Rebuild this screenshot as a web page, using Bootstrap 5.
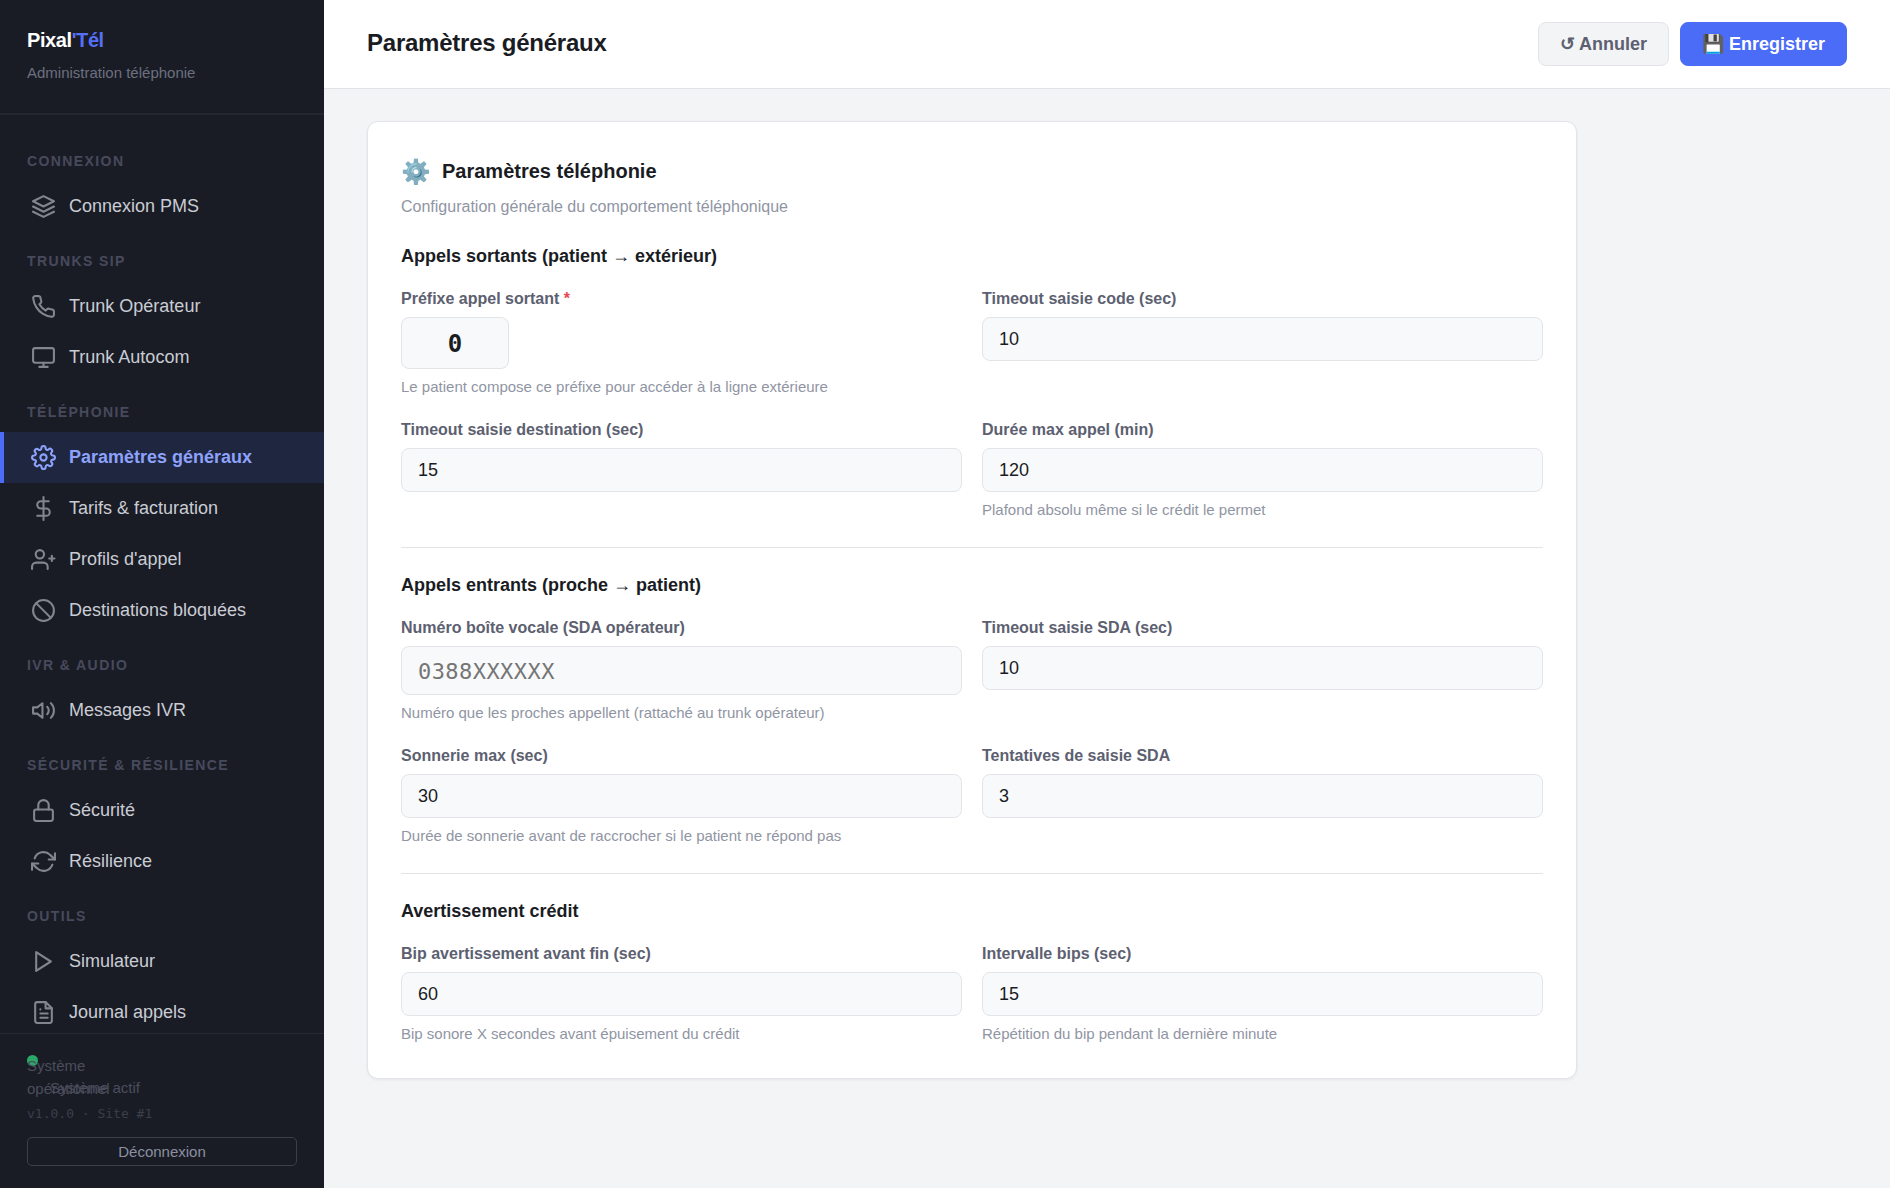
<!DOCTYPE html>
<html lang="fr">
<head>
<meta charset="utf-8">
<meta name="viewport" content="width=device-width, initial-scale=1">
<title>Pixal'Tél – Paramètres généraux</title>
<link href="https://cdn.jsdelivr.net/npm/bootstrap@5.3.0/dist/css/bootstrap.min.css" rel="stylesheet">
<style>
  :root {
    --ink: #1a1c23;
    --muted: #9095a3;
    --label: #5c6070;
    --line: #e2e4e8;
    --accent: #4a6cf7;
    --dark: #1a1c25;
    --sans: "Liberation Sans", Arial, sans-serif;
    --mono: "DejaVu Sans Mono", monospace;
  }
  body { font-family: var(--sans); font-size: 18px; line-height: 24px; color: var(--ink); background: #f3f4f6; }

  /* Sidebar */
  .side { width: 324px; height: 100vh; top: 0; background: var(--dark); }
  .brand { padding: 27px 27px 28px; border-bottom: 2px solid #252730; }
  .brand-name { font-size: 20px; line-height: 26px; letter-spacing: -.02em; color: #fff; }
  .brand-name span { color: #5570f5; }
  .brand-sub { font-size: 15px; line-height: 24px; margin-top: 8px; color: #6b7080; }
  .menu { padding-top: 17px; min-height: 0; }
  .menu-title { font-size: 14px; line-height: 20px; letter-spacing: .1em; padding: 19px 27px 10px; margin: 0; color: #474a5c; }
  .menu-link { gap: 13px; padding: 12px 27px; line-height: 27px; border-left: 4px solid transparent; color: #c9ccd4; text-decoration: none; }
  .menu-link svg { width: 25px; height: 25px; flex: none; fill: none; stroke: currentColor; stroke-width: 2; stroke-linecap: round; stroke-linejoin: round; opacity: .6; }
  .menu-link.current { background: #1f2640; border-left-color: var(--accent); color: #8da2fb; font-weight: 700; }
  .menu-link.current svg { opacity: 1; }
  .side-foot { padding: 19px 27px 22px; border-top: 1px solid #272932; background: var(--dark); font-size: 15px; line-height: 23px; color: #4a4d5c; }
  .state { height: 51px; }
  .dot { width: 11px; height: 11px; left: 0; top: 2px; background: #2ba868; }
  .state-long { width: 90px; left: 0; top: 1px; }
  .state-short { left: 23px; top: 23px; white-space: nowrap; }
  .version { font-family: var(--mono); font-size: 13px; line-height: 20px; color: #3b3e4b; }
  .btn-out { margin-top: 13px; padding: 0; font-size: 15px; line-height: 27px; border: 1px solid #3b3e4b; border-radius: 5px; color: #8b90a0; }

  /* Header */
  .topbar { padding: 22px 43px; border-bottom: 1px solid var(--line); background: #fff; }
  .page-title { font-size: 24px; line-height: 30px; letter-spacing: -.01em; padding-bottom: 2px; }
  .bar-actions { gap: 11px; }
  .btn-bar { padding: 9px 21px; font-size: 18px; line-height: 24px; font-weight: 700; border-radius: 8px; }
  .btn-undo { background: #f3f4f6; border-color: var(--line); color: var(--label); }
  .btn-save { background: var(--accent); border-color: var(--accent); color: #fff; }

  /* Form card */
  .content { padding: 32px 43px; }
  .panel { max-width: 1210px; padding: 33px; border: 1px solid var(--line); border-radius: 11px; background: #fff; box-shadow: 0 1px 3px rgba(0,0,0,.06); }
  .panel-head { gap: 11px; height: 33px; }
  .panel-head .emoji { font-size: 24px; line-height: 33px; }
  .panel-title { font-size: 20px; line-height: 33px; }
  .panel-sub { font-size: 16px; margin: 7px 0 25px; color: var(--muted); }
  .group-title { font-size: 18px; line-height: 24px; margin: 0 0 20px; }
  .fields { --bs-gutter-x: 20px; --bs-gutter-y: 21px; }
  .field label { font-size: 16px; line-height: 22px; font-weight: 700; margin-bottom: 7px; color: var(--label); }
  .field .form-control { height: 44px; padding: 1px 16px 0; font-size: 18px; line-height: 24px; border: 1px solid var(--line); border-radius: 8px; background: #f8f9fb; color: var(--ink); }
  .field .prefix { width: 108px; height: 52px; font-family: var(--mono); font-size: 24px; font-weight: 700; text-align: center; }
  .field .number { height: 49px; font-family: var(--mono); font-size: 22px; letter-spacing: .02em; }
  .field .number::placeholder { color: #757575; }
  .required { color: #e5484d; }
  .hint { font-size: 15px; line-height: 22px; margin: 7px 0 0; color: var(--muted); }
  .rule { margin: 26px 0 25px; border: 0; border-top: 1px solid var(--line); opacity: 1; }
</style>
</head>
<body>
<div class="d-flex align-items-start">

  <aside class="side d-flex flex-column flex-shrink-0 position-sticky">
    <div class="brand">
      <div class="brand-name fw-bold">Pixal<span>'Tél</span></div>
      <div class="brand-sub">Administration téléphonie</div>
    </div>

    <nav class="menu flex-grow-1 overflow-hidden" aria-label="Menu principal">
      <h2 class="menu-title fw-bold">CONNEXION</h2>
      <a class="menu-link d-flex align-items-center" href="#"><svg viewBox="0 0 24 24"><path d="M12 2 2 7l10 5 10-5-10-5z"/><path d="m2 17 10 5 10-5M2 12l10 5 10-5"/></svg>Connexion PMS</a>

      <h2 class="menu-title fw-bold">TRUNKS SIP</h2>
      <a class="menu-link d-flex align-items-center" href="#"><svg viewBox="0 0 24 24"><path d="M22 16.92v3a2 2 0 0 1-2.18 2 19.79 19.79 0 0 1-8.63-3.07 19.5 19.5 0 0 1-6-6 19.79 19.79 0 0 1-3.07-8.67A2 2 0 0 1 4.11 2h3a2 2 0 0 1 2 1.72 12.84 12.84 0 0 0 .7 2.81 2 2 0 0 1-.45 2.11L8.09 9.91a16 16 0 0 0 6 6l1.27-1.27a2 2 0 0 1 2.11-.45 12.84 12.84 0 0 0 2.81.7A2 2 0 0 1 22 16.92z"/></svg>Trunk Opérateur</a>
      <a class="menu-link d-flex align-items-center" href="#"><svg viewBox="0 0 24 24"><rect x="2" y="3" width="20" height="14" rx="2"/><path d="M8 21h8M12 17v4"/></svg>Trunk Autocom</a>

      <h2 class="menu-title fw-bold">TÉLÉPHONIE</h2>
      <a class="menu-link current d-flex align-items-center" href="#" aria-current="page"><svg viewBox="0 0 24 24"><circle cx="12" cy="12" r="3"/><path d="M19.4 15a1.65 1.65 0 0 0 .33 1.82l.06.06a2 2 0 0 1-2.83 2.83l-.06-.06a1.65 1.65 0 0 0-1.82-.33 1.65 1.65 0 0 0-1 1.51V21a2 2 0 0 1-4 0v-.09A1.65 1.65 0 0 0 9 19.4a1.65 1.65 0 0 0-1.82.33l-.06.06a2 2 0 0 1-2.83-2.83l.06-.06a1.65 1.65 0 0 0 .33-1.82 1.65 1.65 0 0 0-1.51-1H3a2 2 0 0 1 0-4h.09A1.65 1.65 0 0 0 4.6 9a1.65 1.65 0 0 0-.33-1.82l-.06-.06a2 2 0 0 1 2.83-2.83l.06.06a1.65 1.65 0 0 0 1.82.33H9a1.65 1.65 0 0 0 1-1.51V3a2 2 0 0 1 4 0v.09a1.65 1.65 0 0 0 1 1.51 1.65 1.65 0 0 0 1.82-.33l.06-.06a2 2 0 0 1 2.83 2.83l-.06.06a1.65 1.65 0 0 0-.33 1.82V9a1.65 1.65 0 0 0 1.51 1H21a2 2 0 0 1 0 4h-.09a1.65 1.65 0 0 0-1.51 1z"/></svg>Paramètres généraux</a>
      <a class="menu-link d-flex align-items-center" href="#"><svg viewBox="0 0 24 24"><path d="M12 1v22M17 5H9.500a3.500 3.500 0 0 0 0 7h5a3.500 3.500 0 0 1 0 7H6"/></svg>Tarifs &amp; facturation</a>
      <a class="menu-link d-flex align-items-center" href="#"><svg viewBox="0 0 24 24"><path d="M16 21v-2a4 4 0 0 0-4-4H5a4 4 0 0 0-4 4v2"/><circle cx="8.500" cy="7" r="4"/><path d="M20 8.500v5M17.500 11h5"/></svg>Profils d'appel</a>
      <a class="menu-link d-flex align-items-center" href="#"><svg viewBox="0 0 24 24"><circle cx="12" cy="12" r="10"/><path d="m4.930 4.930 14.140 14.140"/></svg>Destinations bloquées</a>

      <h2 class="menu-title fw-bold">IVR &amp; AUDIO</h2>
      <a class="menu-link d-flex align-items-center" href="#"><svg viewBox="0 0 24 24"><path d="M11 5 6 9H2v6h4l5 4V5z"/><path d="M19.070 4.930a10 10 0 0 1 0 14.140M15.540 8.460a5 5 0 0 1 0 7.070"/></svg>Messages IVR</a>

      <h2 class="menu-title fw-bold">SÉCURITÉ &amp; RÉSILIENCE</h2>
      <a class="menu-link d-flex align-items-center" href="#"><svg viewBox="0 0 24 24"><rect x="3" y="11" width="18" height="11" rx="2"/><path d="M7 11V7a5 5 0 0 1 10 0v4"/></svg>Sécurité</a>
      <a class="menu-link d-flex align-items-center" href="#"><svg viewBox="0 0 24 24"><path d="M23 4v6h-6M1 20v-6h6"/><path d="M3.510 9a9 9 0 0 1 14.850-3.360L23 10M1 14l4.640 4.360A9 9 0 0 0 20.490 15"/></svg>Résilience</a>

      <h2 class="menu-title fw-bold">OUTILS</h2>
      <a class="menu-link d-flex align-items-center" href="#"><svg viewBox="0 0 24 24"><path d="m5 3 14 9-14 9V3z"/></svg>Simulateur</a>
      <a class="menu-link d-flex align-items-center" href="#"><svg viewBox="0 0 24 24"><path d="M14 2H6a2 2 0 0 0-2 2v16a2 2 0 0 0 2 2h12a2 2 0 0 0 2-2V8z"/><path d="M14 2v6h6M16 13H9M16 17H9M9 9h0"/></svg>Journal appels</a>
    </nav>

    <div class="side-foot">
      <div class="state position-relative">
        <span class="dot position-absolute rounded-circle"></span>
        <span class="state-long position-absolute">Système opérationnel</span>
        <span class="state-short position-absolute">Système actif</span>
      </div>
      <div class="version">v1.0.0 · Site #1</div>
      <button class="btn btn-out w-100 d-block" type="button">Déconnexion</button>
    </div>
  </aside>

  <div class="flex-grow-1">
    <header class="topbar d-flex align-items-center justify-content-between">
      <h1 class="page-title fw-bold mb-0">Paramètres généraux</h1>
      <div class="bar-actions d-flex">
        <button class="btn btn-bar btn-undo" type="button">↺ Annuler</button>
        <button class="btn btn-bar btn-save" type="submit" form="settings">💾 Enregistrer</button>
      </div>
    </header>

    <main class="content">
      <form class="panel" id="settings">
        <div class="panel-head d-flex align-items-center">
          <span class="emoji">⚙️</span>
          <h2 class="panel-title fw-bold mb-0">Paramètres téléphonie</h2>
        </div>
        <p class="panel-sub">Configuration générale du comportement téléphonique</p>

        <h3 class="group-title fw-bold">Appels sortants (patient → extérieur)</h3>
        <div class="row fields">
          <div class="col-6 field">
            <label class="d-block" for="prefix">Préfixe appel sortant <span class="required">*</span></label>
            <input class="form-control prefix" id="prefix" type="text" value="0">
            <p class="hint">Le patient compose ce préfixe pour accéder à la ligne extérieure</p>
          </div>
          <div class="col-6 field">
            <label class="d-block" for="code">Timeout saisie code (sec)</label>
            <input class="form-control" id="code" type="text" value="10">
          </div>
          <div class="col-6 field">
            <label class="d-block" for="dest">Timeout saisie destination (sec)</label>
            <input class="form-control" id="dest" type="text" value="15">
          </div>
          <div class="col-6 field">
            <label class="d-block" for="max">Durée max appel (min)</label>
            <input class="form-control" id="max" type="text" value="120">
            <p class="hint">Plafond absolu même si le crédit le permet</p>
          </div>
        </div>

        <hr class="rule">

        <h3 class="group-title fw-bold">Appels entrants (proche → patient)</h3>
        <div class="row fields">
          <div class="col-6 field">
            <label class="d-block" for="voice">Numéro boîte vocale (SDA opérateur)</label>
            <input class="form-control number" id="voice" type="text" placeholder="0388XXXXXX">
            <p class="hint">Numéro que les proches appellent (rattaché au trunk opérateur)</p>
          </div>
          <div class="col-6 field">
            <label class="d-block" for="sda">Timeout saisie SDA (sec)</label>
            <input class="form-control" id="sda" type="text" value="10">
          </div>
          <div class="col-6 field">
            <label class="d-block" for="ring">Sonnerie max (sec)</label>
            <input class="form-control" id="ring" type="text" value="30">
            <p class="hint">Durée de sonnerie avant de raccrocher si le patient ne répond pas</p>
          </div>
          <div class="col-6 field">
            <label class="d-block" for="tries">Tentatives de saisie SDA</label>
            <input class="form-control" id="tries" type="text" value="3">
          </div>
        </div>

        <hr class="rule">

        <h3 class="group-title fw-bold">Avertissement crédit</h3>
        <div class="row fields">
          <div class="col-6 field">
            <label class="d-block" for="beep">Bip avertissement avant fin (sec)</label>
            <input class="form-control" id="beep" type="text" value="60">
            <p class="hint">Bip sonore X secondes avant épuisement du crédit</p>
          </div>
          <div class="col-6 field">
            <label class="d-block" for="every">Intervalle bips (sec)</label>
            <input class="form-control" id="every" type="text" value="15">
            <p class="hint">Répétition du bip pendant la dernière minute</p>
          </div>
        </div>
      </form>
    </main>
  </div>
</div>
<script src="https://cdn.jsdelivr.net/npm/bootstrap@5.3.0/dist/js/bootstrap.bundle.min.js"></script>
</body>
</html>
